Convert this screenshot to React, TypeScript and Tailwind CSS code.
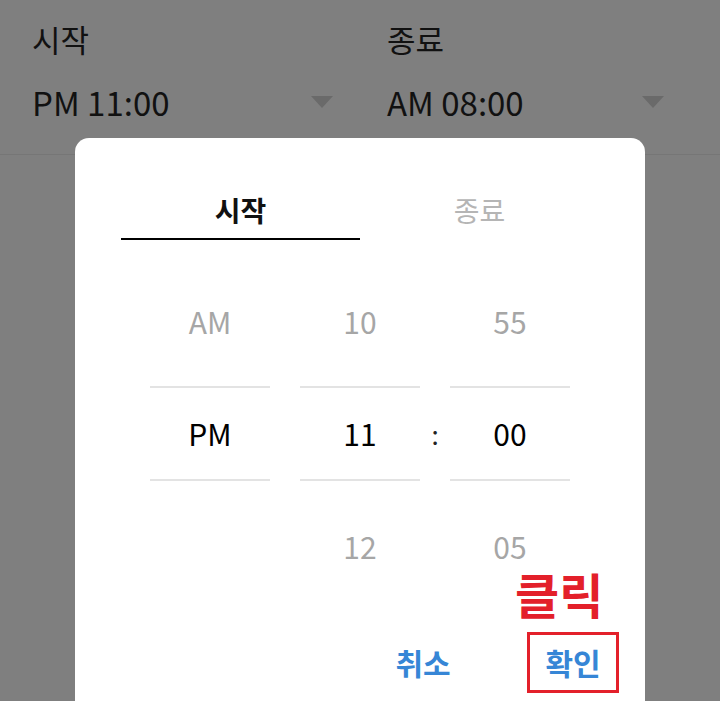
import React from 'react';

const font = { fontFamily: '"Noto Sans CJK KR", "Noto Sans", sans-serif' };

const Column: React.FC<{ top: string; mid: string; bottom: string }> = ({ top, mid, bottom }) => (
  <div className="flex w-[120px] flex-col items-center">
    <div className="flex h-[110px] items-center justify-center pb-[20px] text-[30px] text-[#a6a6a6]">{top}</div>
    <div className="flex h-[95px] w-full items-center justify-center border-y-2 border-[#e3e3e3] text-[30px] text-black">
      {mid}
    </div>
    <div className="h-[88px] pt-[45px] text-center text-[30px] leading-[40px] text-[#a6a6a6]">{bottom}</div>
  </div>
);

const App: React.FC = () => {
  return (
    <div className="relative h-[701px] w-[720px] overflow-hidden bg-[#7f7f7f]" style={font}>
      {/* underlying form */}
      <div className="grid grid-cols-2 border-b border-[#767676] pl-[32px] pt-[19px] pb-[30px]">
        <div className="pr-[43px]">
          <div className="text-[31px] leading-[40px] text-[#111]">시작</div>
          <div className="mt-[21px] flex items-center justify-between">
            <span className="text-[33px] leading-[44px] text-[#111]">PM 11:00</span>
            <span className="h-0 w-0 border-x-[11px] border-t-[12px] border-x-transparent border-t-[#6a6a6a]" />
          </div>
        </div>
        <div className="pl-[11px] pr-[56px]">
          <div className="text-[31px] leading-[40px] text-[#111]">종료</div>
          <div className="mt-[21px] flex items-center justify-between">
            <span className="text-[33px] leading-[44px] text-[#111]">AM 08:00</span>
            <span className="h-0 w-0 border-x-[11px] border-t-[12px] border-x-transparent border-t-[#6a6a6a]" />
          </div>
        </div>
      </div>

      {/* dialog */}
      <div className="absolute left-[75px] top-[138px] h-[600px] w-[570px] rounded-[14px] bg-white">
        <div className="flex px-[46px] pt-[52px]">
          <div className="flex h-[50px] w-[239px] items-start justify-center border-b-2 border-black text-[28px] font-bold leading-[40px] text-[#111]">
            시작
          </div>
          <div className="flex h-[50px] flex-1 items-start justify-center text-[28px] leading-[40px] text-[#b5b5b5]">
            종료
          </div>
        </div>

        <div className="mt-[36px] flex items-start px-[75px]">
          <Column top="AM" mid="PM" bottom="" />
          <div className="w-[30px]" />
          <Column top="10" mid="11" bottom="12" />
          <div className="flex w-[30px] justify-center pt-[138px] text-[26px] text-[#222]">:</div>
          <Column top="55" mid="00" bottom="05" />
        </div>

        <div className="relative flex justify-end pr-[26px]">
          <span className="absolute left-[440px] top-0 text-[48px] font-bold leading-[48px] text-[#e3202a]">
            클릭
          </span>
          <button className="mt-[63px] flex h-[61px] w-[92px] items-center justify-center text-[30px] font-bold text-[#3686d6]">
            취소
          </button>
          <button className="ml-[58px] mt-[63px] flex h-[61px] w-[92px] items-center justify-center border-[3px] border-[#e3202a] text-[30px] font-bold text-[#3686d6]">
            확인
          </button>
        </div>
      </div>
    </div>
  );
};

export default App;
